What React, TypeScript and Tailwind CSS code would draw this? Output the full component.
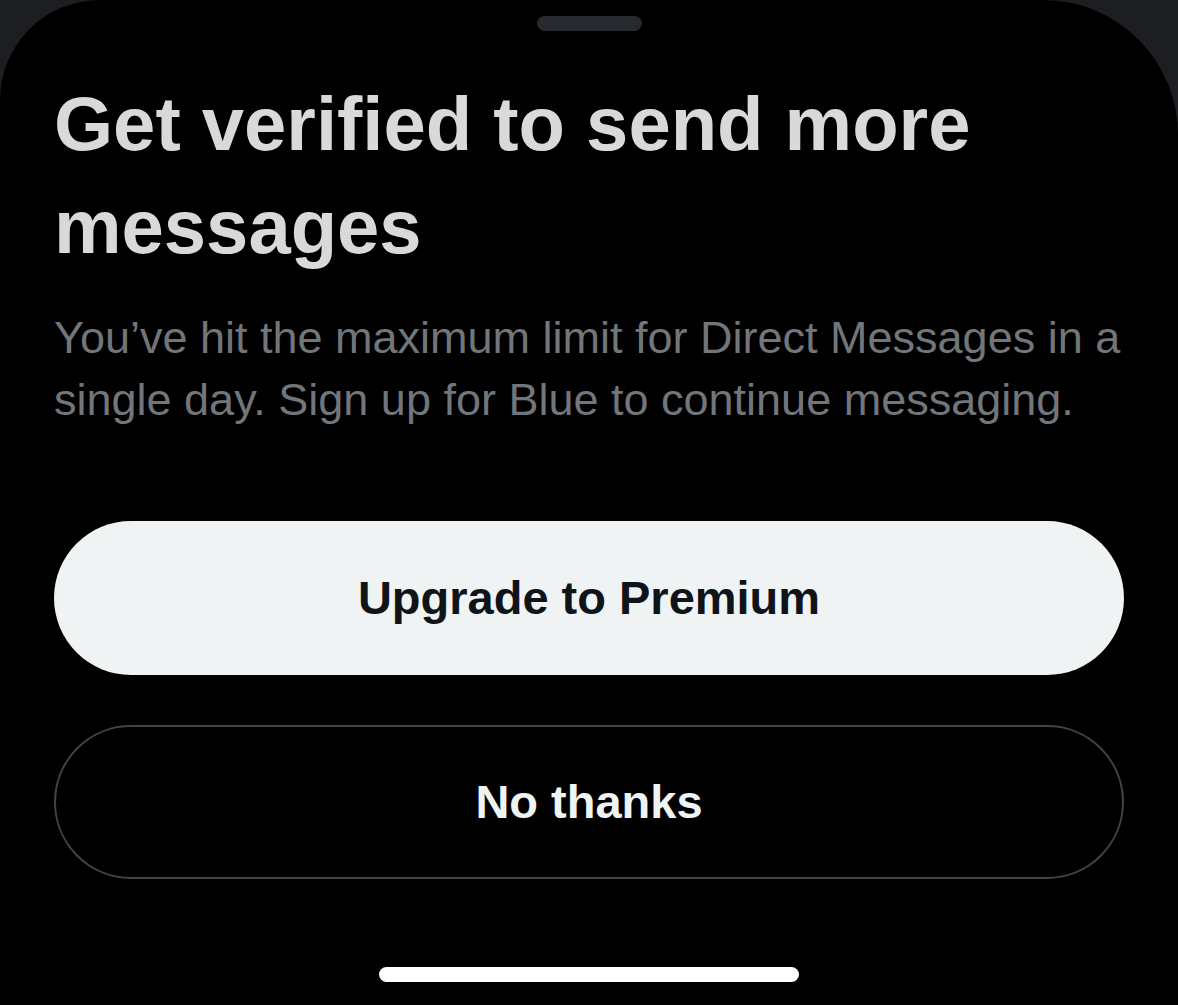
export default function App() {
  return (
    <div
      className="min-h-[1005px] w-full overflow-hidden bg-[#1c1e21]"
      style={{ fontFamily: '"Liberation Sans", Arial, sans-serif' }}
    >
      {/* Bottom sheet */}
      <div className="flex min-h-[1005px] flex-col rounded-tl-[100px] rounded-tr-[135px] bg-black px-[54px] pt-4">
        {/* Grabber */}
        <div className="mx-auto h-[15px] w-[105px] rounded-full bg-[#26292d]" />

        {/* Title */}
        <h1 className="mt-[41px] text-[76px] leading-[103px] font-bold text-[#d9d9d9]">
          Get verified to send more
          <br />
          messages
        </h1>

        {/* Description */}
        <p className="mt-[29px] text-[45px] leading-[62px] whitespace-nowrap text-[#71767b]">
          You’ve hit the maximum limit for Direct Messages in a
          <br />
          single day. Sign up for Blue to continue messaging.
        </p>

        {/* Actions */}
        <div className="mt-[90px] flex flex-col gap-[50px]">
          <button className="flex h-[154px] w-full items-center justify-center rounded-full bg-[#eff3f4] text-[47px] font-bold text-[#0f1419]">
            Upgrade to Premium
          </button>
          <button className="flex h-[154px] w-full items-center justify-center rounded-full border-2 border-[#404448] bg-black text-[47px] font-bold text-[#eff3f4]">
            No thanks
          </button>
        </div>

        {/* Home indicator */}
        <div className="mx-auto mt-[88px] h-[15px] w-[420px] rounded-full bg-white" />
      </div>
    </div>
  );
}
